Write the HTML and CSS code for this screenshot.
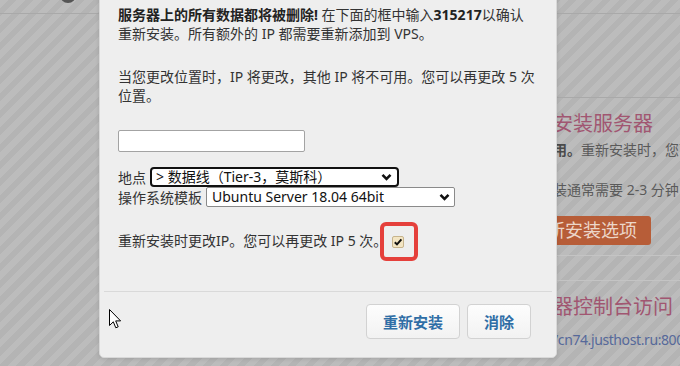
FILE: index.html
```html
<!DOCTYPE html>
<html lang="zh-CN">
<head>
<meta charset="utf-8">
<title>重新安装</title>
<link rel="stylesheet" href="styles.css">
</head>
<body>
<div class="page">
  <header class="topbar"><span class="avatar"></span></header>
  <div class="bg-col">
    <section class="panel panel-a"></section>
    <section class="panel panel-b">
      <h2 class="bg-title">安装服务器</h2>
      <p class="bg-text"><b>用。</b>重新安装时，您可以</p>
      <p class="bg-text gap">装通常需要 2-3 分钟</p>
      <span class="bg-btn">重新安装选项</span>
    </section>
    <section class="panel panel-c">
      <h2 class="bg-title">器控制台访问</h2>
      <p class="bg-link">/cn74.justhost.ru:8006</p>
    </section>
  </div>
</div>

<div class="modal">
  <div class="modal-body">
    <p class="para"><b>服务器上的所有数据都将被删除!</b> 在下面的框中输入<b>315217</b>以确认<br>重新安装。所有额外的 IP 都需要重新添加到 VPS。</p>
    <p class="para second">当您更改位置时，IP 将更改，其他 IP 将不可用。您可以再更改 5 次<br>位置。</p>
    <input class="confirm" type="text">
    <div class="fields">
      <div class="field">
        <span class="label">地点</span>
        <div class="select focused">
          <span class="select-text">&gt; 数据线（Tier-3，莫斯科）</span>
          <svg class="chev" width="11" height="8" viewBox="0 0 11 8"><polyline points="1.5,1.8 5.5,5.8 9.5,1.8" fill="none" stroke="#111" stroke-width="2.6"/></svg>
        </div>
      </div>
      <div class="field">
        <span class="label">操作系统模板</span>
        <div class="select">
          <span class="select-text">Ubuntu Server 18.04 64bit</span>
          <svg class="chev" width="11" height="8" viewBox="0 0 11 8"><polyline points="1.5,1.8 5.5,5.8 9.5,1.8" fill="none" stroke="#111" stroke-width="2.6"/></svg>
        </div>
      </div>
    </div>
    <p class="para check-line">重新安装时更改IP。您可以再更改 IP 5 次。<span class="check"><svg width="10" height="10" viewBox="0 0 10 10"><polyline points="1.8,5.2 4,7.4 8.4,2.4" fill="none" stroke="#111" stroke-width="2"/></svg></span></p>
  </div>
  <div class="modal-footer">
    <button class="btn" type="button">重新安装</button>
    <button class="btn" type="button">消除</button>
  </div>
</div>

<svg class="cursor" width="13" height="20" viewBox="0 0 13 20"><path d="M0.5,0.5 L0.5,16.5 L4.3,12.8 L6.8,18.8 L9.2,17.8 L6.7,11.9 L11.6,11.9 Z" fill="#fff" stroke="#000" stroke-width="1" stroke-linejoin="miter"/></svg>
</body>
</html>
```
FILE: styles.css
```css
* , *::before, *::after { box-sizing: border-box; }
html, body { margin: 0; padding: 0; }
body {
  width: 680px;
  height: 366px;
  overflow: hidden;
  position: relative;
  font-family: "Segoe UI", "Noto Sans", "Noto Sans CJK SC", sans-serif;
  background: repeating-linear-gradient(135deg, #bcbcbc 0 6px, #b4b4b4 6px 12px);
}

/* background page (dimmed) */
.page { width: 680px; }
.topbar {
  height: 14px;
  border-bottom: 1px solid #a9a9a9;
  padding-left: 60px;
  overflow: hidden;
}
.avatar {
  display: block;
  width: 16px;
  height: 16px;
  margin-top: -13px;
  border-radius: 50%;
  background: #555;
}
.bg-col {
  margin-left: 540px;
  padding-left: 13px;
}
.panel-a {
  height: 84px;
  border-bottom: 1px solid #a9a9a9;
}
.panel-b {
  padding: 12px 0 10px;
  border-bottom: 1px solid #c4c4c4;
}
.panel-c {
  margin-top: 24px;
  border-top: 1px solid #c4c4c4;
  padding-top: 12px;
}
.bg-title {
  margin: 0;
  font-size: 20px;
  line-height: 28px;
  font-weight: normal;
  color: #a15671;
  white-space: nowrap;
}
.bg-text {
  margin: 2px 0 0;
  font-size: 14px;
  line-height: 20px;
  color: #5a5a5a;
  white-space: nowrap;
}
.bg-text b { color: #4a4a4a; }
.bg-text.gap { margin-top: 20px; }
.bg-btn {
  display: block;
  width: fit-content;
  margin: 16px 0 0 -38px;
  height: 29px;
  line-height: 29px;
  padding: 0 14px;
  border-radius: 3px;
  background: #b75d38;
  color: #ecd6c9;
  font-size: 18px;
  white-space: nowrap;
}
.bg-link {
  margin: 9px 0 0;
  font-size: 14px;
  line-height: 20px;
  letter-spacing: -0.4px;
  color: #56699a;
  white-space: nowrap;
}

/* modal */
.modal {
  position: absolute;
  left: 99px;
  top: -20px;
  width: 458px;
  height: 378px;
  background: #eeeeee;
  border: 1px solid #d8d8d8;
  border-radius: 0 0 5px 5px;
  box-shadow: 0 1px 4px rgba(0, 0, 0, 0.12);
  color: #333;
}
.modal-body {
  padding: 23.5px 16px 0 18px;
  height: 310px;
}
.para {
  margin: 0;
  font-size: 14px;
  line-height: 19.5px;
  white-space: nowrap;
}
.para b { color: #222; }
.para.second { margin-top: 23px; }
.confirm {
  display: block;
  margin: 24.5px 0 0;
  width: 187px;
  height: 22px;
  border: 1px solid #a3a3a3;
  border-radius: 2px;
  background: #fff;
  padding: 0 4px;
  font: inherit;
}
.fields { margin-top: 15px; }
.field {
  display: flex;
  align-items: center;
  height: 20px;
  font-size: 14px;
}
.label {
  margin-right: 4px;
  white-space: nowrap;
}
.select {
  display: flex;
  align-items: center;
  justify-content: space-between;
  width: 249px;
  height: 20px;
  background: #fff;
  border: 1px solid #8a8a8a;
  border-radius: 2px;
  padding: 0 4px 0 5px;
  color: #111;
  white-space: nowrap;
}
.select.focused {
  border: 2px solid #111;
  border-radius: 4px;
  padding: 0 5px 0 4px;
}
.select-text { line-height: 18px; }
.chev { flex: none; }
.check-line { margin-top: 24px; }
.check {
  position: relative;
  display: inline-flex;
  align-items: center;
  justify-content: center;
  width: 12px;
  height: 12px;
  margin-left: 5px;
  vertical-align: -1px;
  background: #f3e5c3;
  border: 1px solid #c7b48c;
  border-radius: 2px;
}
.check::after {
  content: "";
  position: absolute;
  left: -13px;
  top: -15px;
  width: 38px;
  height: 39px;
  border: 4px solid #e5403b;
  border-radius: 6px;
}
.modal-footer {
  margin: 0 4px;
  border-top: 1px solid #d9d9d9;
  padding: 12px 21px 0 0;
  display: flex;
  justify-content: flex-end;
  gap: 7px;
}
.btn {
  height: 35px;
  padding: 0 16px;
  border: 1px solid #d2d2d2;
  border-radius: 4px;
  background: linear-gradient(#fdfdfd, #f2f2f2);
  color: #2f6ea6;
  font-family: "Noto Sans CJK SC", sans-serif;
  font-size: 15px;
  font-weight: bold;
  line-height: 33px;
}

.cursor {
  position: absolute;
  left: 109px;
  top: 309px;
}
```
